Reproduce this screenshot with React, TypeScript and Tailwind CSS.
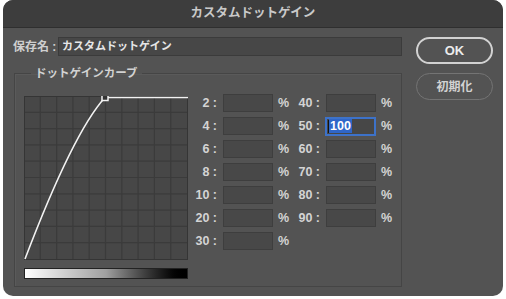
import React from "react";

const FONT = { fontFamily: '"Liberation Sans", "Noto Sans CJK JP", sans-serif' };

const left = ["2", "4", "6", "8", "10", "20", "30"];
const right = ["40", "50", "60", "70", "80", "90"];

function Field({ label, value, lw }: { label: string; value?: string; lw: string }) {
  const focused = value !== undefined;
  return (
    <div className="flex items-center h-[18px]">
      <span className={`${lw} text-right pr-[1px] text-[12.5px] font-bold text-[#d4d4d4]`}>{label} :</span>
      {focused ? (
        <div className="ml-[4px] w-[51px] h-[19px] border-2 border-[#3d72c9] bg-[#474747] flex items-center pl-[1px]">
          <span className="w-px h-[13px] bg-[#111]" />
          <span className="bg-[#2f66c8] text-white text-[12.5px] leading-[14px] px-px font-semibold">{value}</span>
        </div>
      ) : (
        <div className="ml-[5px] w-[50px] h-[18px] border border-[#3e3e3e] bg-[#484848]" />
      )}
      <span className="ml-[5px] w-[13px] text-[12.5px] font-bold text-[#d4d4d4]">%</span>
    </div>
  );
}

function Curve() {
  const cell = 163 / 10;
  const lines = Array.from({ length: 9 }, (_, i) => (i + 1) * cell);
  return (
    <svg width="164" height="164" viewBox="0 0 164 164" className="block">
      <rect x="0" y="0" width="164" height="164" fill="#474747" />
      {lines.map((p) => (
        <g key={p} stroke="#3b3b3b" strokeWidth="1.2">
          <line x1={p} y1="0" x2={p} y2="164" />
          <line x1="0" y1={p} x2="164" y2={p} />
        </g>
      ))}
      <rect x="0.5" y="0.5" width="163" height="163" fill="none" stroke="#353535" />
      <path d="M1 163 C25 100 55 30 81 1.5 L164 1.5" fill="none" stroke="#f2f2f2" strokeWidth="1.6" />
      <rect x="78" y="-1.5" width="6" height="6" fill="#333" stroke="#f2f2f2" strokeWidth="1.5" />
    </svg>
  );
}

export default function App() {
  return (
    <div className="w-[506px] h-[299px] bg-white pt-0 px-[3px]" style={FONT}>
      <div className="h-[296px] rounded-[10px] overflow-hidden bg-[#535353] flex flex-col">
        <div className="h-[28px] shrink-0 bg-[#3d3d3d] border-b border-[#2f2f2f] flex items-center justify-center text-[12.5px] font-bold text-[#c9c9c9]">
          カスタムドットゲイン
        </div>
        <div className="flex">
          <div className="pl-[10px] pt-[9px]">
            <div className="flex items-center h-[19px]">
              <span className="w-[45px] text-[12px] font-bold text-[#cfcfcf]">保存名 :</span>
              <div className="w-[344px] h-[19px] bg-[#474747] border border-[#3b3b3b] flex items-center pl-[3px] text-[11px] font-bold text-[#e6e6e6]">
                カスタムドットゲイン
              </div>
            </div>
            <fieldset className="mt-[10px] ml-px w-[388px] h-[221px] border border-[#454545] shadow-[inset_1px_1px_0_#5a5a5a] pl-[9px]">
              <legend className="ml-[7px] px-[4px] text-[11.5px] font-bold text-[#d2d2d2] leading-[14px]">
                ドットゲインカーブ
              </legend>
              <div className="flex mt-[16px]">
                <div className="flex flex-col">
                  <Curve />
                  <div className="mt-[8px] w-[164px] h-[11px] border border-[#222] bg-gradient-to-r from-white via-[#a0a0a0] to-black" />
                </div>
                <div className="ml-[3px] -mt-[2px] flex">
                  <div className="flex flex-col gap-[5px]">
                    {left.map((l) => (
                      <Field key={l} label={l} lw="w-[27px]" />
                    ))}
                  </div>
                  <div className="flex flex-col gap-[5px]">
                    {right.map((l) => (
                      <Field key={l} label={l} lw="w-[30px]" value={l === "50" ? "100" : undefined} />
                    ))}
                  </div>
                </div>
              </div>
            </fieldset>
          </div>
          <div className="ml-[14px] pt-[9px] flex flex-col gap-[9px]">
            <button className="w-[77px] h-[27px] rounded-full border-2 border-[#d2d2d2] text-[13px] font-bold text-[#ececec]">
              OK
            </button>
            <button className="w-[77px] h-[27px] rounded-full border border-[#747474] text-[12px] font-bold text-[#d2d2d2]">
              初期化
            </button>
          </div>
        </div>
      </div>
    </div>
  );
}
